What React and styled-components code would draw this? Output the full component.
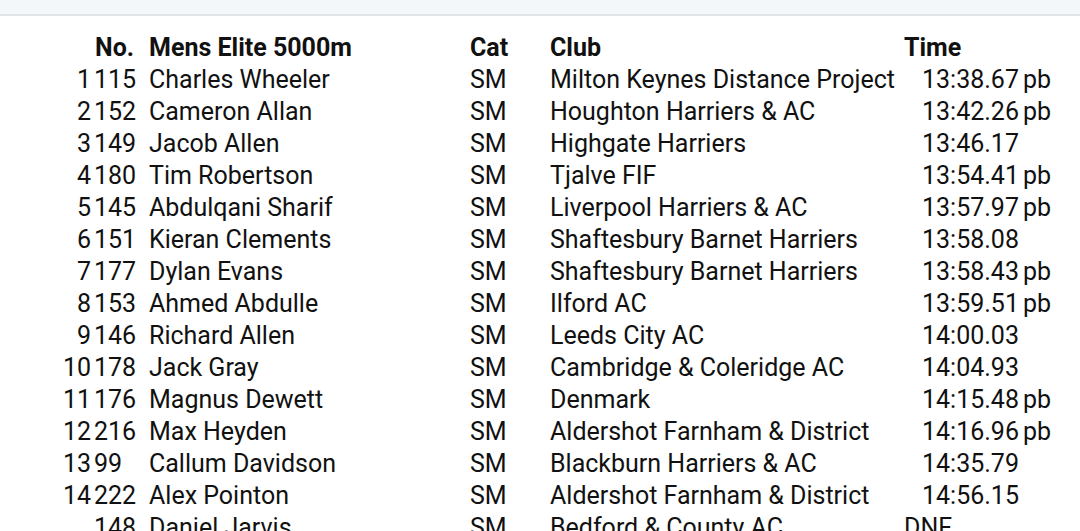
import styled, { createGlobalStyle } from 'styled-components';

const results = [
  { pos: '1', bib: '115', name: 'Charles Wheeler', cat: 'SM', club: 'Milton Keynes Distance Project', time: '13:38.67', pb: true },
  { pos: '2', bib: '152', name: 'Cameron Allan', cat: 'SM', club: 'Houghton Harriers & AC', time: '13:42.26', pb: true },
  { pos: '3', bib: '149', name: 'Jacob Allen', cat: 'SM', club: 'Highgate Harriers', time: '13:46.17' },
  { pos: '4', bib: '180', name: 'Tim Robertson', cat: 'SM', club: 'Tjalve FIF', time: '13:54.41', pb: true },
  { pos: '5', bib: '145', name: 'Abdulqani Sharif', cat: 'SM', club: 'Liverpool Harriers & AC', time: '13:57.97', pb: true },
  { pos: '6', bib: '151', name: 'Kieran Clements', cat: 'SM', club: 'Shaftesbury Barnet Harriers', time: '13:58.08' },
  { pos: '7', bib: '177', name: 'Dylan Evans', cat: 'SM', club: 'Shaftesbury Barnet Harriers', time: '13:58.43', pb: true },
  { pos: '8', bib: '153', name: 'Ahmed Abdulle', cat: 'SM', club: 'Ilford AC', time: '13:59.51', pb: true },
  { pos: '9', bib: '146', name: 'Richard Allen', cat: 'SM', club: 'Leeds City AC', time: '14:00.03' },
  { pos: '10', bib: '178', name: 'Jack Gray', cat: 'SM', club: 'Cambridge & Coleridge AC', time: '14:04.93' },
  { pos: '11', bib: '176', name: 'Magnus Dewett', cat: 'SM', club: 'Denmark', time: '14:15.48', pb: true },
  { pos: '12', bib: '216', name: 'Max Heyden', cat: 'SM', club: 'Aldershot Farnham & District', time: '14:16.96', pb: true },
  { pos: '13', bib: '99', name: 'Callum Davidson', cat: 'SM', club: 'Blackburn Harriers & AC', time: '14:35.79' },
  { pos: '14', bib: '222', name: 'Alex Pointon', cat: 'SM', club: 'Aldershot Farnham & District', time: '14:56.15' },
  { pos: '', bib: '148', name: 'Daniel Jarvis', cat: 'SM', club: 'Bedford & County AC', time: 'DNF', dnf: true },
];

const GlobalStyle = createGlobalStyle`
  html, body {
    margin: 0;
    padding: 0;
    background: #ffffff;
    overflow: hidden;
  }
  body {
    font-family: Roboto, "Noto Sans", sans-serif;
    color: #111111;
  }
`;

const TopBar = styled.div`
  height: 14px;
  background: #f4f7f9;
  border-bottom: 2px solid #dfe5e8;
`;

const Table = styled.div`
  display: grid;
  grid-template-columns: 91px 58px 321px 80px 354px 1fr;
  padding-top: 16px;
  font-size: 25px;
  line-height: 32px;
`;

const Row = styled.div`
  display: contents;
  font-weight: ${({ $head }) => ($head ? 700 : 400)};
`;

const Cell = styled.div`
  white-space: nowrap;
  text-align: ${({ $right }) => ($right ? 'right' : 'left')};
  padding-left: ${({ $indent }) => $indent || 0}px;
`;

const Pb = styled.span`
  margin-left: 4px;
`;

export default function App() {
  return (
    <>
      <GlobalStyle />
      <TopBar />
      <Table>
        <Row $head>
          <Cell $right />
          <Cell $indent={4}>No.</Cell>
          <Cell>Mens Elite 5000m</Cell>
          <Cell>Cat</Cell>
          <Cell>Club</Cell>
          <Cell>Time</Cell>
        </Row>
        {results.map((r) => (
          <Row key={r.bib}>
            <Cell $right>{r.pos}</Cell>
            <Cell $indent={3}>{r.bib}</Cell>
            <Cell>{r.name}</Cell>
            <Cell>{r.cat}</Cell>
            <Cell>{r.club}</Cell>
            <Cell $indent={r.dnf ? 0 : 18}>
              {r.time}
              {r.pb && <Pb>pb</Pb>}
            </Cell>
          </Row>
        ))}
      </Table>
    </>
  );
}
